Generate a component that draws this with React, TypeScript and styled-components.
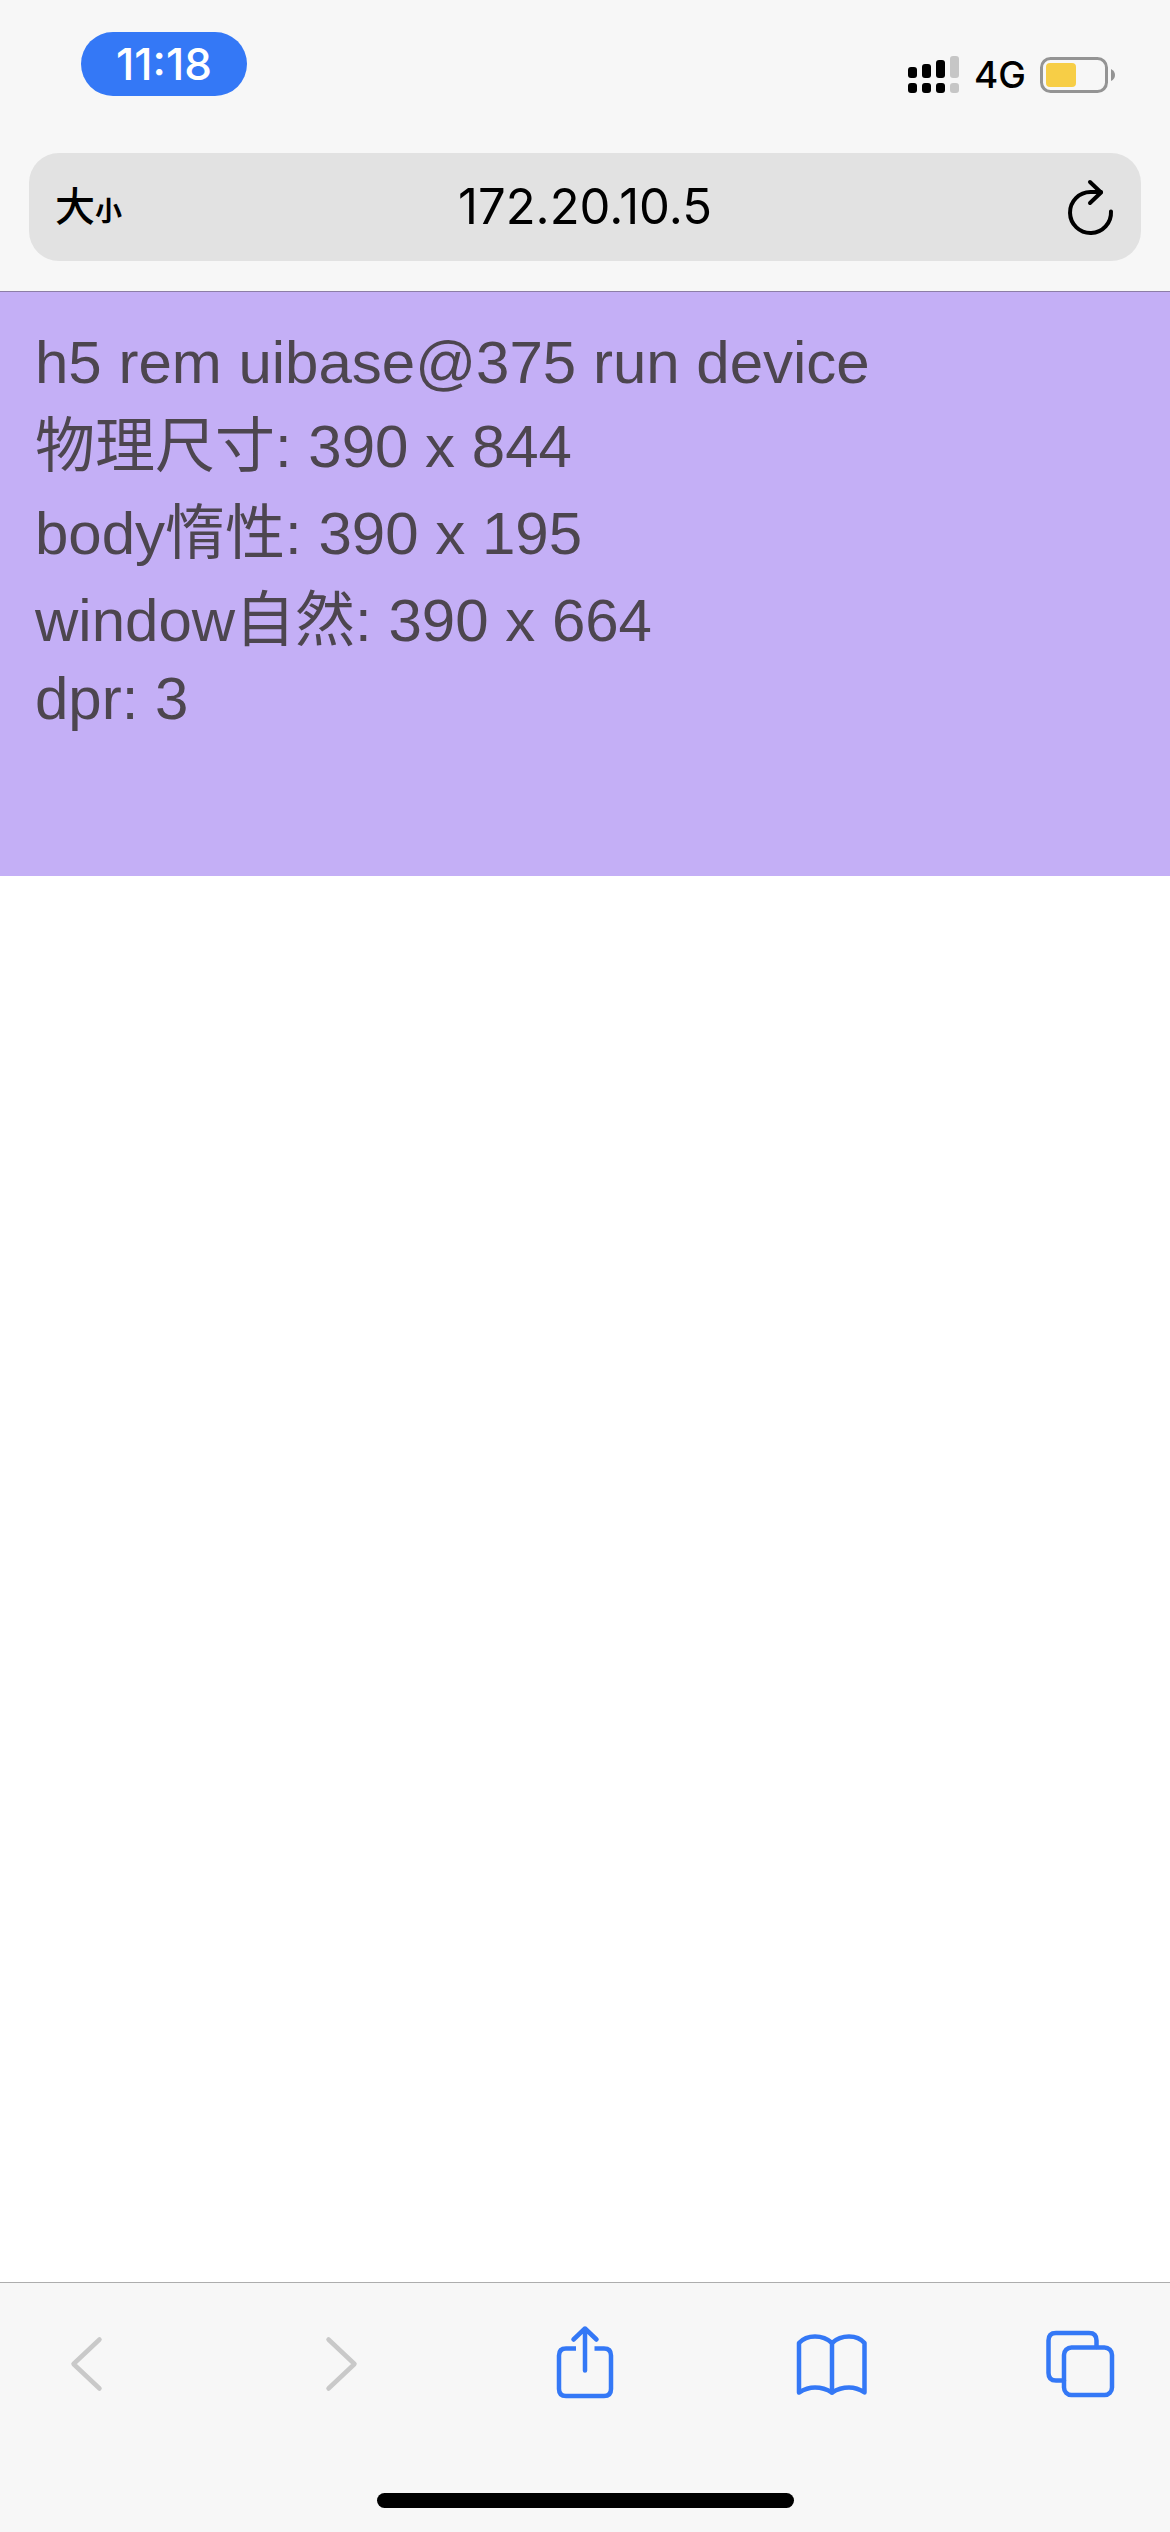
import React from 'react';
import styled, { createGlobalStyle } from 'styled-components';

const GlobalStyle = createGlobalStyle`
  * { box-sizing: border-box; }
  body { margin: 0; background: #ffffff; }
  button { margin: 0; padding: 0; border: 0; background: none; color: inherit; font: inherit; }
  svg { display: block; }
`;

const systemFont = `Inter, "Noto Sans CJK SC", sans-serif`;

const Screen = styled.div`
  display: flex;
  flex-direction: column;
  min-height: 100vh;
  font-family: ${systemFont};
  color: #000000;
`;

const Header = styled.header`
  background: #f7f7f7;
  border-bottom: 1px solid #8c7ea6;
  padding-bottom: 30px;
`;

const StatusBar = styled.div`
  display: flex;
  justify-content: space-between;
  align-items: flex-start;
  padding: 32px 54px 56px 81px;
`;

const TimePill = styled.button`
  width: 166px;
  height: 64px;
  border-radius: 32px;
  background: #3478f6;
  color: #ffffff;
  font-size: 44px;
  line-height: 64px;
  font-weight: 500;
`;

const StatusIcons = styled.div`
  display: flex;
  align-items: center;
  gap: 14px;
  padding-top: 21px;
`;

const Network = styled.span`
  font-size: 37px;
  line-height: 44px;
  font-weight: 500;
`;

const AddressBar = styled.div`
  display: grid;
  grid-template-columns: 1fr auto 1fr;
  align-items: center;
  height: 108px;
  margin: 0 29px;
  padding: 0 26px;
  border-radius: 30px;
  background: #e2e2e2;
`;

const TextSizeButton = styled.button`
  justify-self: start;
  display: flex;
  align-items: baseline;
  font-family: "Noto Sans CJK SC", sans-serif;
  font-size: 40px;
  line-height: 60px;
  font-weight: 500;
`;

const SmallGlyph = styled.span`
  font-size: 27px;
  font-weight: 700;
`;

const Address = styled.span`
  font-size: 49px;
  line-height: 60px;
`;

const ReloadButton = styled.button`
  justify-self: end;
`;

const Content = styled.main`
  flex: 1;
  background: #ffffff;
`;

const Panel = styled.section`
  min-height: 584px;
  padding: 33px 35px;
  background: #c4aff6;
  color: #4d464f;
  font-family: "Liberation Sans", "Noto Sans CJK SC", sans-serif;
  font-size: 60px;
`;

const Line = styled.p<{ $tall?: boolean }>`
  margin: 0;
  padding-top: ${({ $tall }) => ($tall ? 6 : 0)}px;
  line-height: ${({ $tall }) => ($tall ? 81 : 75)}px;
`;

const Footer = styled.footer`
  background: #f7f7f7;
  border-top: 1px solid #adadad;
`;

const Toolbar = styled.nav`
  display: flex;
  justify-content: space-between;
  padding: 41px 49px 89px;
`;

const ToolButton = styled.button`
  color: #3478f6;
  &:disabled { color: #c9c9c9; }
`;

const HomeIndicator = styled.div`
  width: 417px;
  height: 15px;
  margin: 0 auto 24px;
  border-radius: 8px;
  background: #000000;
`;

const Signal = () => (
  <svg width="52" height="38" viewBox="0 0 52 38" aria-label="Signal">
    <rect x="0" y="11" width="9" height="11" rx="3" />
    <rect x="14" y="8" width="9" height="14" rx="3" />
    <rect x="28" y="4" width="9" height="18" rx="3" />
    <rect x="42" y="0" width="9" height="22" rx="3" fill="#c6c6c6" />
    <rect x="0" y="27" width="9" height="10" rx="3" />
    <rect x="14" y="27" width="9" height="10" rx="3" />
    <rect x="28" y="27" width="9" height="10" rx="3" />
    <rect x="42" y="27" width="9" height="10" rx="3" fill="#c6c6c6" />
  </svg>
);

const Battery = () => (
  <svg width="76" height="36" viewBox="0 0 76 36" aria-label="Battery">
    <rect x="1.5" y="1.5" width="65" height="33" rx="9" fill="none" stroke="#949494" strokeWidth="3" />
    <rect x="6" y="6" width="30" height="24" rx="4" fill="#f7ce46" />
    <path d="M71 12 Q75 14 75 18 Q75 22 71 24 Z" fill="#949494" />
  </svg>
);

const Glyph = ({ children }: { children: React.ReactNode }) => (
  <svg width="80" height="80" viewBox="0 0 80 80" fill="none" stroke="currentColor" strokeWidth="4.5" strokeLinecap="round" strokeLinejoin="round">
    {children}
  </svg>
);

const metrics = [
  { text: 'h5 rem uibase@375 run device' },
  { text: '物理尺寸: 390 x 844', tall: true },
  { text: 'body惰性: 390 x 195', tall: true },
  { text: 'window自然: 390 x 664', tall: true },
  { text: 'dpr: 3' },
];

export default function App() {
  return (
    <Screen>
      <GlobalStyle />
      <Header>
        <StatusBar>
          <TimePill>11:18</TimePill>
          <StatusIcons>
            <Signal />
            <Network>4G</Network>
            <Battery />
          </StatusIcons>
        </StatusBar>
        <AddressBar>
          <TextSizeButton>
            大<SmallGlyph>小</SmallGlyph>
          </TextSizeButton>
          <Address>172.20.10.5</Address>
          <ReloadButton aria-label="Reload">
            <svg width="48" height="60" viewBox="0 0 48 60" fill="none" stroke="currentColor" strokeWidth="4" strokeLinecap="round" strokeLinejoin="round">
              <path d="M44 34.5 A20.5 20.5 0 1 1 23.5 15 H34" />
              <path d="M23 5 L34 15.5 L23 26" />
            </svg>
          </ReloadButton>
        </AddressBar>
      </Header>
      <Content>
        <Panel>
          {metrics.map(({ text, tall }) => (
            <Line key={text} $tall={tall}>{text}</Line>
          ))}
        </Panel>
      </Content>
      <Footer>
        <Toolbar>
          <ToolButton aria-label="Back" disabled>
            <Glyph><path d="M50.5 15.5 L24.5 40 L50.5 64.5" /></Glyph>
          </ToolButton>
          <ToolButton aria-label="Forward" disabled>
            <Glyph><path d="M31.5 15.5 L57.5 40 L31.5 64.5" /></Glyph>
          </ToolButton>
          <ToolButton aria-label="Share">
            <Glyph>
              <path strokeLinecap="butt" d="M31 24.5 H21 Q14 24.5 14 31.5 V65 Q14 72 21 72 H59 Q66 72 66 65 V31.5 Q66 24.5 59 24.5 H49.5" />
              <path d="M40 4.5 V46.5 M28.5 15.5 L40 4.5 L51.5 15.5" />
            </Glyph>
          </ToolButton>
          <ToolButton aria-label="Bookmarks">
            <Glyph>
              <path d="M6 68.5 V19 Q12 12.5 22 12.5 Q32 12.5 39 19 Q46 12.5 56 12.5 Q66 12.5 71.5 19 V68.5 Q64 63.5 56 63.5 Q47 63.5 39 68.5 Q31 63.5 22 63.5 Q14 63.5 6 68.5 Z" />
              <path d="M39 19 V68.5" />
            </Glyph>
          </ToolButton>
          <ToolButton aria-label="Tabs">
            <Glyph>
              <path d="M23 56.5 H15 Q7.5 56.5 7.5 49 V16.5 Q7.5 9 15 9 H48 Q55.5 9 55.5 16.5 V23" />
              <rect x="23" y="23.5" width="48" height="47.5" rx="7.5" />
            </Glyph>
          </ToolButton>
        </Toolbar>
        <HomeIndicator />
      </Footer>
    </Screen>
  );
}
